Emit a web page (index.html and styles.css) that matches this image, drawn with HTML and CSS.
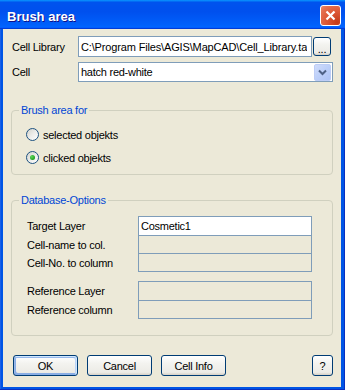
FILE: index.html
```html
<!DOCTYPE html>
<html lang="en">
<head>
<meta charset="utf-8">
<title>Brush area</title>
<link rel="stylesheet" href="styles.css">
</head>
<body>
<div class="window">
  <div class="titlebar">
    <span class="title">Brush area</span>
    <button class="close" aria-label="Close">
      <svg viewBox="0 0 19 19" width="19" height="19"><path d="M5.5 5.5 L13.5 13.5 M13.5 5.5 L5.5 13.5" stroke="#fff" stroke-width="2.2" fill="none"/></svg>
    </button>
  </div>
  <div class="frame">
    <div class="body">
      <div class="row lib">
        <label class="lbl">Cell Library</label>
        <input class="field" type="text" value="C:\Program Files\AGIS\MapCAD\Cell_Library.tab" readonly>
        <button class="btn browse">...</button>
      </div>
      <div class="row cell">
        <label class="lbl">Cell</label>
        <div class="combo">
          <span class="combo-text">hatch red-white</span>
          <span class="combo-btn"><svg viewBox="0 0 15 15" width="15" height="15"><path d="M4 5.5 L7.5 9 L11 5.5" stroke="#4D6185" stroke-width="2" fill="none"/></svg></span>
        </div>
      </div>
      <fieldset class="group g1">
        <legend>Brush area for</legend>
        <div class="opt"><span class="radio"></span><span>selected objekts</span></div>
        <div class="opt"><span class="radio on"><span class="dot"></span></span><span>clicked objekts</span></div>
      </fieldset>
      <fieldset class="group g2">
        <legend>Database-Options</legend>
        <div class="stack">
          <div class="frow first"><span class="flabel">Target Layer</span><span class="fbox white">Cosmetic1</span></div>
          <div class="frow"><span class="flabel">Cell-name to col.</span><span class="fbox"></span></div>
          <div class="frow"><span class="flabel">Cell-No. to column</span><span class="fbox"></span></div>
        </div>
        <div class="stack">
          <div class="frow first"><span class="flabel">Reference Layer</span><span class="fbox"></span></div>
          <div class="frow"><span class="flabel">Reference column</span><span class="fbox"></span></div>
        </div>
      </fieldset>
      <div class="buttons">
        <button class="btn ok">OK</button>
        <button class="btn">Cancel</button>
        <button class="btn">Cell Info</button>
        <button class="btn help">?</button>
      </div>
    </div>
  </div>
</div>
</body>
</html>
```
FILE: styles.css
```css
* { box-sizing: border-box; }
html, body { margin: 0; padding: 0; }
body {
  width: 345px;
  height: 390px;
  font-family: "Liberation Sans", Arial, sans-serif;
  font-size: 11px;
  letter-spacing: -0.25px;
  color: #000;
  background: #fff;
}
.window {
  width: 345px;
  height: 390px;
  display: flex;
  flex-direction: column;
}
.titlebar {
  height: 29px;
  flex: none;
  display: flex;
  align-items: flex-start;
  background: linear-gradient(180deg, #0997ff, #0053ee 8%, #0050ee 40%, #0060fb 85%, #0066ff 93%, #005bff 95%, #003dd7 96%, #003dd7);
}
.title {
  margin: 9px 0 0 7px;
  font-weight: bold;
  font-size: 13px;
  line-height: 15px;
  letter-spacing: 0;
  color: #fff;
  text-shadow: 1px 1px #0f1089;
}
.close {
  margin: 5px 4px 0 auto;
  width: 21px;
  height: 21px;
  padding: 0;
  border: 1px solid #fff;
  border-radius: 3px;
  background: radial-gradient(circle at 85% 85%, #c33a18 0%, #dc5634 45%, #e4704f 80%, #ec8a6d 100%);
  display: flex;
  align-items: center;
  justify-content: center;
}
.close svg { display: block; }
.frame {
  flex: 1;
  display: flex;
  padding: 0 4px 3px 3px;
  background: #0055e5;
  box-shadow: inset -1px -1px #0a2fc0, inset 1px 0 #1b5fe6;
}
.body {
  flex: 1;
  background: #ece9d8;
  padding: 7px 8px 0 8px;
  display: flex;
  flex-direction: column;
}
.row { display: flex; align-items: center; }
.lib { height: 21px; }
.cell { height: 20px; margin-top: 5px; }
.lbl { width: 67px; flex: none; padding-left: 1px; }
.field {
  font: inherit;
  letter-spacing: -0.15px;
  width: 234px;
  height: 21px;
  margin: 0;
  padding: 0 4px 0 2px;
  border: 1px solid #7f9db9;
  border-radius: 0;
  background: #fff;
  color: #000;
  outline: none;
}
.btn {
  font: inherit;
  letter-spacing: inherit;
  color: #000;
  height: 21px;
  width: 65px;
  padding: 0;
  border: 1px solid #003c74;
  border-radius: 3px;
  background: linear-gradient(180deg, #ffffff 0%, #f3f3ef 40%, #ecebe6 86%, #d6d0c5 100%);
}
.browse {
  width: 18px;
  height: 19px;
  margin-left: 1px;
  line-height: 19px;
  padding-top: 2px;
}
.combo {
  flex: 1;
  height: 20px;
  border: 1px solid #7f9db9;
  background: #fff;
  display: flex;
  align-items: center;
  padding-left: 2px;
}
.combo-text { flex: 1; }
.combo-btn {
  width: 17px;
  height: 17px;
  margin-right: 1px;
  border: 1px solid #bdcdf6;
  border-radius: 2px;
  background: linear-gradient(135deg, #d0dcfb 0%, #bccff9 50%, #aec4f5 100%);
  display: flex;
}
.combo-btn svg { display: block; }
.group {
  margin: 0;
  min-width: 0;
  padding: 6px 7px 5px 7px;
  border: 1px solid #d0d0bf;
  border-radius: 4px;
}
.group legend {
  padding: 0 2px;
  color: #0046d5;
  line-height: 13px;
}
.g1 { margin-top: 22px; }
.g2 { margin-top: 19px; padding-top: 9px; padding-bottom: 16px; }
.opt {
  display: flex;
  align-items: center;
  gap: 4px;
  height: 23px;
  padding-left: 7px;
}
.radio {
  width: 13px;
  height: 13px;
  flex: none;
  border-radius: 50%;
  border: 1px solid #1c5180;
  background: linear-gradient(135deg, #d4d4cc 0%, #ececea 50%, #ffffff 100%);
  display: flex;
  align-items: center;
  justify-content: center;
}
.dot {
  width: 5px;
  height: 5px;
  border-radius: 50%;
  background: radial-gradient(circle at 35% 35%, #5fd85a 0%, #21a121 70%);
}
.stack + .stack { margin-top: 9px; }
.frow { display: flex; align-items: center; }
.flabel { width: 119px; flex: none; padding-left: 8px; }
.fbox {
  width: 174px;
  height: 18px;
  border: 1px solid #7f9db9;
  border-top: none;
}
.first .fbox { height: 20px; border-top: 1px solid #7f9db9; }
.white {
  background: #fff;
  padding-left: 2px;
  line-height: 18px;
}
.buttons {
  display: flex;
  gap: 9px;
  margin-top: 19px;
  padding-left: 2px;
}
.ok {
  box-shadow: inset -1px 1px #cee7ff, inset 1px 2px #98b8ea, inset -2px 2px #bcd4f6, inset 1px -1px #89ade4, inset 2px -2px #89ade4;
}
.help { width: 21px; margin-left: auto; }
```
